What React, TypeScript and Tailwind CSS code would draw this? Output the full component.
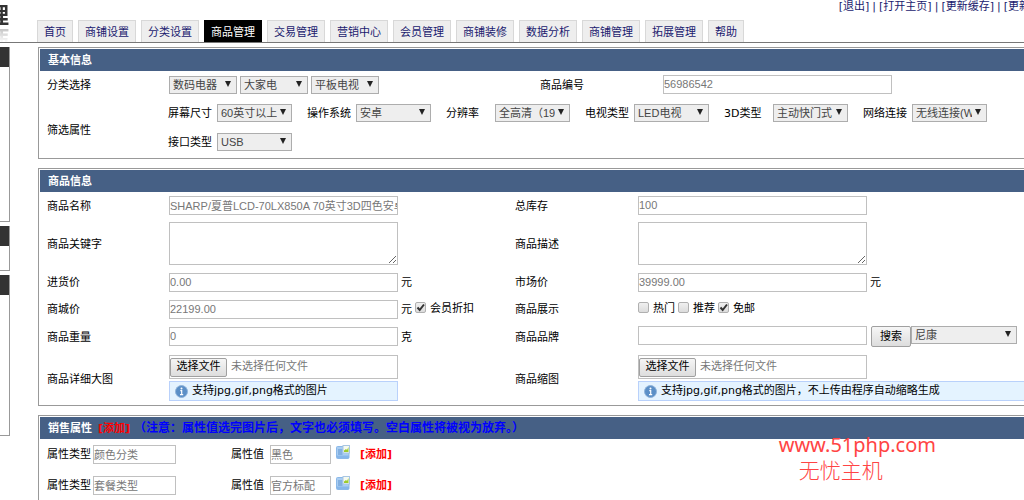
import React, { useRef } from 'react';
import { clsx } from 'clsx';

const tabs = ['首页', '商铺设置', '分类设置', '商品管理', '交易管理', '营销中心', '会员管理', '商铺装修', '数据分析', '商铺管理', '拓展管理', '帮助'];

const topLinks = ['[退出]', '[打开主页]', '[更新缓存]', '[更新'];

// Filter attributes of the chosen category
const filters = [
  { id: 'size', name: '屏幕尺寸', value: '60英寸以上' },
  { id: 'os', name: '操作系统', value: '安卓' },
  { id: 'resolution', name: '分辨率', value: '全高清（1920*1080）' },
  { id: 'tv', name: '电视类型', value: 'LED电视' },
  { id: 'dimension', name: '3D类型', value: '主动快门式' },
  { id: 'network', name: '网络连接', value: '无线连接(WIFI)' },
  { id: 'port', name: '接口类型', value: 'USB' }
];

const saleAttributes = [
  { id: 'color', type: '颜色分类', value: '黑色' },
  { id: 'package', type: '套餐类型', value: '官方标配' }
];

const inputFont = "font-['Liberation_Sans','Noto_Sans_CJK_SC',sans-serif]";

const Select: React.FC<{ id?: string; label?: string; value: string; className: string }> = ({ id, label, value, className }) => (
  <span className={clsx('relative inline-block h-[18px] shrink-0', className)}>
    <select
      id={id}
      aria-label={label}
      className={clsx('block h-full w-full appearance-none border border-[#adadad] bg-[#eeeeee] pl-[3px] pr-3.5 text-[11px] leading-4 text-[#444]', inputFont)}
    >
      <option>{value}</option>
    </select>
    <svg viewBox="0 0 6 6" className="pointer-events-none absolute right-1.5 top-[5px] h-1.5 w-1.5">
      <path d="M0 0h6L3 6z" fill="#222" />
    </svg>
  </span>
);

const TextInput: React.FC<{ id?: string; label?: string; value?: string; className?: string }> = ({ id, label, value = '', className = 'w-[229px]' }) => (
  <input
    id={id}
    aria-label={label}
    type="text"
    defaultValue={value}
    className={clsx('h-[19px] shrink-0 border border-[#c0c0c0] bg-white pb-px text-[11px] leading-4 text-[#777]', inputFont, className)}
  />
);

const TextArea: React.FC<{ id: string }> = ({ id }) => (
  <textarea id={id} className="block h-[43px] w-[229px] resize border border-[#c0c0c0] bg-white" />
);

const Checkbox: React.FC<{ label: string; checked?: boolean }> = ({ label, checked }) => (
  <label className="flex items-center gap-1">
    <span className="relative mb-1 block h-[11px] w-[11px]">
      <input
        type="checkbox"
        defaultChecked={checked}
        className="peer block h-[11px] w-[11px] appearance-none rounded-xs border border-[#b0b0b0] bg-linear-to-b from-[#f0f0f0] to-[#dcdcdc]"
      />
      <svg viewBox="0 0 11 11" className="pointer-events-none absolute inset-0 hidden h-[11px] w-[11px] peer-checked:block">
        <path d="M2.5 5.5L4.7 8L9 2.5" fill="none" stroke="#333" strokeWidth="2" />
      </svg>
    </span>
    {label}
  </label>
);

const FilePicker: React.FC<{ label: string }> = ({ label }) => {
  const fileRef = useRef<HTMLInputElement>(null);

  return (
    <div className="flex h-6 w-[229px] items-center gap-1 border border-[#c0c0c0]">
      <input ref={fileRef} type="file" aria-label={label} className="hidden" />
      <button
        type="button"
        onClick={() => fileRef.current?.click()}
        className="h-[19px] w-[57px] shrink-0 rounded-xs border border-[#a0a0a0] bg-linear-to-b from-[#f6f6f6] to-[#dddddd] leading-4"
      >
        选择文件
      </button>
      <span className="text-[#777]">未选择任何文件</span>
    </div>
  );
};

const Hint: React.FC<{ children: React.ReactNode; className?: string }> = ({ children, className }) => (
  <div className={clsx('mt-0.5 flex h-5 items-center gap-1 border border-[#b9d1fb] bg-[#e4f3ff] pl-[5px]', className)}>
    <svg viewBox="0 0 13 13" className="h-[13px] w-[13px]">
      <circle cx="6.5" cy="6.5" r="6" fill="#5b8fc7" stroke="#8fb3d9" />
      <circle cx="6.5" cy="3.5" r="1" fill="#fff" />
      <path d="M5.3 5.7h1.4v3.8M5 9.7h3.2" fill="none" stroke="#fff" strokeWidth="1.2" />
    </svg>
    {children}
  </div>
);

const ImageIcon: React.FC = () => (
  <svg viewBox="0 0 14 14" className="h-3.5 w-3.5">
    <rect x=".5" y="1.5" width="12.5" height="12" rx="1" fill="#a9cdf2" stroke="#8ab8e8" />
    <path d="M2 5h4.5M2 7h4.5M2 9h4.5" stroke="#5c93cf" />
    <path d="M1 10.5h12v2.5H1z" fill="#86b6ea" />
    <rect x="7" y=".5" width="6.5" height="7.5" fill="#f6faf0" stroke="#a9c6e2" />
    <path d="M8 7V5.5l2-1.5 1 1 1.500-3V7z" fill="#9ccb2c" />
  </svg>
);

const Panel: React.FC<{ title: React.ReactNode; children: React.ReactNode }> = ({ title, children }) => (
  <section className="border border-[#999] p-px">
    <h2 className="h-[22px] bg-[#466085] pl-2 font-bold leading-6 text-white">{title}</h2>
    {children}
  </section>
);

const SideBox: React.FC<{ className: string }> = ({ className }) => (
  <div className={clsx('shrink-0 border-b border-r border-[#999]', className)}>
    <div className="h-5 bg-[#333]" />
  </div>
);

const Header: React.FC = () => (
  <header className="flex h-[43px] shrink-0 items-end border-b border-[#777]">
    <div className="flex h-full w-[37px] shrink-0">
      <div className="flex h-full w-[9px] justify-end overflow-hidden pt-1">
        <span className="h-6 text-[22px] font-bold leading-6 text-[#333] [-webkit-box-reflect:below_-2px_linear-gradient(transparent_30%,rgba(0,0,0,0.35))]">
          理
        </span>
      </div>
    </div>
    <div className="flex h-full min-w-0 grow flex-col justify-between">
      <div className="-mr-1.5 flex justify-end gap-[3px] pt-px leading-3 text-[#1a1a6e]">
        {topLinks.map((link, i) => (
          <React.Fragment key={link}>
            {i > 0 && <span>|</span>}
            <a href="#">{link}</a>
          </React.Fragment>
        ))}
      </div>
      <nav className="flex gap-[5px]">
        {tabs.map((tab) => (
          <a
            key={tab}
            href="#"
            className={clsx(
              'h-[22px] border border-b-0 px-1.5 leading-6',
              tab === '商品管理' ? 'border-black bg-black text-white' : 'border-[#d8d8d8] bg-[#eeeeee] text-[#1a1a6e]'
            )}
          >
            {tab}
          </a>
        ))}
      </nav>
    </div>
  </header>
);

const App: React.FC = () => {
  return (
    <div className="relative flex h-screen flex-col overflow-hidden whitespace-nowrap bg-white font-['DejaVu_Sans','Noto_Sans_CJK_SC',sans-serif] text-[11px] leading-4 text-black">
      <Header />

      <div className="flex pt-1">
        {/* Left menu */}
        <aside className="flex w-2.5 shrink-0 flex-col gap-1">
          <SideBox className="h-[175px]" />
          <SideBox className="h-[45px]" />
          <SideBox className="h-[161px]" />
        </aside>

        {/* The form runs past the right edge of the frame */}
        <main className="-mr-16 ml-7 flex min-w-0 grow flex-col gap-[9px]">
          <Panel title="基本信息">
            <div className="grid grid-cols-[122px_371px_123px_1fr] items-center pb-1.5 pl-[7px] pt-1">
              <span className="pt-0.5">分类选择</span>
              <div className="flex gap-[3px]">
                <Select label="一级分类" value="数码电器" className="w-[68px]" />
                <Select label="二级分类" value="大家电" className="w-[68px]" />
                <Select label="三级分类" value="平板电视" className="w-[68px]" />
              </div>
              <label htmlFor="sn" className="pt-0.5">商品编号</label>
              <TextInput id="sn" value="56986542" />
              <span className="pt-4">筛选属性</span>
              <div className="col-span-3 -ml-px grid grid-cols-[repeat(6,139px)] gap-y-[11px] pt-2.5">
                {filters.map((filter) => (
                  <div key={filter.id} className="flex items-end">
                    <label htmlFor={filter.id} className="w-[49px]">{filter.name}</label>
                    <Select id={filter.id} value={filter.value} className="w-[75px]" />
                  </div>
                ))}
              </div>
            </div>
          </Panel>

          <Panel title="商品信息">
            <div className="grid grid-cols-[122px_346px_123px_1fr] items-center gap-y-[7px] pb-[3px] pl-[7px] pt-1">
              <label htmlFor="name" className="pt-0.5">商品名称</label>
              <TextInput id="name" value="SHARP/夏普LCD-70LX850A 70英寸3D四色安卓" />
              <label htmlFor="stock" className="pt-0.5">总库存</label>
              <TextInput id="stock" value="100" />

              <label htmlFor="keywords" className="pt-0.5">商品关键字</label>
              <TextArea id="keywords" />
              <label htmlFor="desc" className="pt-0.5">商品描述</label>
              <TextArea id="desc" />

              <label htmlFor="cost" className="pt-0.5">进货价</label>
              <div className="flex h-5 items-center gap-[3px]">
                <TextInput id="cost" value="0.00" /><span className="pt-0.5">元</span>
              </div>
              <label htmlFor="market" className="pt-0.5">市场价</label>
              <div className="flex h-5 items-center gap-[3px]">
                <TextInput id="market" value="39999.00" /><span className="pt-0.5">元</span>
              </div>

              <label htmlFor="price" className="pt-0.5">商城价</label>
              <div className="flex h-5 items-center gap-[3px]">
                <TextInput id="price" value="22199.00" /><span className="pt-0.5">元</span>
                <Checkbox label="会员折扣" checked />
              </div>
              <span className="pt-0.5">商品展示</span>
              <div className="flex items-center gap-[3px]">
                <Checkbox label="热门" />
                <Checkbox label="推荐" />
                <Checkbox label="免邮" checked />
              </div>

              <label htmlFor="weight" className="pt-0.5">商品重量</label>
              <div className="flex items-center gap-[3px]">
                <TextInput id="weight" value="0" /><span className="pt-0.5">克</span>
              </div>
              <label htmlFor="brand" className="pt-0.5">商品品牌</label>
              <div className="flex h-[21px] items-start">
                <TextInput id="brand" />
                <button type="button" className="ml-1 h-[21px] w-10 rounded-xs border border-[#a0a0a0] bg-linear-to-b from-[#f6f6f6] to-[#dddddd]">
                  搜索
                </button>
                <Select label="品牌" value="尼康" className="w-[106px]" />
              </div>

              <span className="pt-1">商品详细大图</span>
              <div className="pt-px">
                <FilePicker label="商品详细大图" />
                <Hint className="w-[229px]">支持jpg,gif,png格式的图片</Hint>
              </div>
              <span className="pt-1">商品缩图</span>
              <div className="pt-px">
                <FilePicker label="商品缩图" />
                <Hint>支持jpg,gif,png格式的图片，不上传由程序自动缩略生成</Hint>
              </div>
            </div>
          </Panel>

          <Panel
            title={
              <>
                销售属性<a href="#" className="ml-1.5 mr-1 text-[#ff0000]">[添加]</a>
                <span className="text-xs leading-[22px] text-[#0000ff]">（注意：属性值选完图片后，文字也必须填写。空白属性将被视为放弃。）</span>
              </>
            }
          >
            <div className="flex flex-col gap-3 pb-3 pl-[7px] pt-1.5">
              {saleAttributes.map((attr) => (
                <div key={attr.id} className="flex items-center">
                  <label htmlFor={`${attr.id}-type`} className="w-[46px]">属性类型</label>
                  <TextInput id={`${attr.id}-type`} value={attr.type} className="w-[83px]" />
                  <label htmlFor={`${attr.id}-value`} className="ml-[55px] w-[39px]">属性值</label>
                  <TextInput id={`${attr.id}-value`} value={attr.value} className="w-[61px]" />
                  <button type="button" aria-label="选择图片" className="ml-[5px] self-start">
                    <ImageIcon />
                  </button>
                  <a href="#" className="ml-2.5 font-bold text-[#ff0000]">[添加]</a>
                </div>
              ))}
            </div>
          </Panel>
        </main>
      </div>

      {/* Site watermark */}
      <div className="pointer-events-none absolute right-[88px] top-[432px] text-[#f44]">
        <div className="font-['Noto_Sans',sans-serif] text-[20px] leading-[26px]">www.51php.com</div>
        <div className="pl-5 text-[21px] font-light leading-[26px]">无忧主机</div>
      </div>
    </div>
  );
};

export default App;
